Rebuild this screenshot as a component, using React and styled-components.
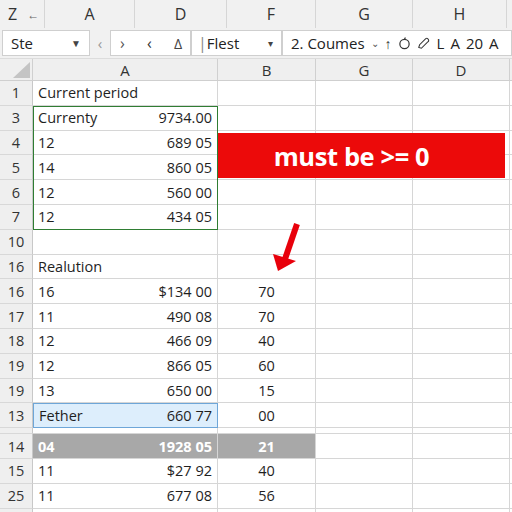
import React from "react";
import styled, { createGlobalStyle } from "styled-components";

const GlobalStyle = createGlobalStyle`
  html, body {
    margin: 0;
    padding: 0;
    background: #ffffff;
  }
  body {
    font-family: "Open Sans", "Noto Sans", sans-serif;
    color: #1f1f1f;
  }
`;

const COLS = [33, 185, 98, 97, 97];
const ROW_H = 24.8;

const Page = styled.div`
  width: 512px;
  height: 512px;
  overflow: hidden;
  display: flex;
  flex-direction: column;
  background: #fff;
`;

const TopStrip = styled.div`
  height: 28px;
  display: flex;
  background: #f1f1f1;
  flex-shrink: 0;
`;

const StripCell = styled.div`
  width: ${(p) => p.$w}px;
  flex-shrink: 0;
  display: flex;
  align-items: center;
  justify-content: ${(p) => (p.$left ? "flex-start" : "center")};
  gap: 10px;
  padding-left: ${(p) => (p.$left ? "8px" : "0")};
  box-sizing: border-box;
  border-right: 1px solid #d6d6d6;
  font-size: 16px;
  color: #333;
`;

const Toolbar = styled.div`
  height: 30px;
  display: flex;
  align-items: center;
  background: #f1f1f1;
  padding-left: 2px;
  flex-shrink: 0;
  border-bottom: 1px solid #dcdcdc;
`;

const Box = styled.div`
  width: ${(p) => p.$w}px;
  height: 26px;
  flex-shrink: 0;
  display: flex;
  align-items: center;
  justify-content: space-between;
  box-sizing: border-box;
  background: #fff;
  border: 1px solid #cfcfcf;
  padding: 0 ${(p) => p.$pr ?? 8}px 0 ${(p) => p.$pl ?? 8}px;
  font-size: 15px;
  color: #222;
  white-space: nowrap;
  overflow: hidden;
`;

const Caret = styled.span`
  font-size: 10px;
  color: #444;
`;

const Glyph = styled.span`
  font-size: ${(p) => p.$size || 16}px;
  color: ${(p) => p.$c || "#444"};
  display: inline-flex;
  align-items: center;
`;

const NavGap = styled.div`
  width: 20px;
  display: flex;
  justify-content: center;
  color: #999;
  font-size: 15px;
`;

const IconRow = styled.div`
  display: flex;
  align-items: center;
  gap: 6px;
`;

const HeaderRow = styled.div`
  height: 22px;
  display: flex;
  background: #efefef;
  border-bottom: 1px solid #cfcfcf;
  flex-shrink: 0;
  box-sizing: border-box;
`;

const ColHead = styled.div`
  width: ${(p) => p.$w}px;
  flex-shrink: 0;
  display: flex;
  align-items: center;
  justify-content: center;
  box-sizing: border-box;
  border-right: 1px solid #d0d0d0;
  font-size: 15px;
  color: #333;
`;

const Corner = styled.div`
  width: 0;
  height: 0;
  border-left: 17px solid transparent;
  border-bottom: 16px solid #c4c4c4;
  align-self: flex-end;
  margin: 0 2px 2px auto;
`;

const Body = styled.div`
  position: relative;
  flex: 1;
`;

const Row = styled.div`
  height: ${(p) => p.$h}px;
  display: flex;
`;

const RowHead = styled.div`
  width: ${COLS[0]}px;
  flex-shrink: 0;
  box-sizing: border-box;
  background: #efefef;
  border-right: 1px solid #c8c8c8;
  border-bottom: 1px solid #d8d8d8;
  display: flex;
  align-items: center;
  justify-content: center;
  font-size: 14.5px;
  color: #333;
`;

const Cell = styled.div`
  width: ${(p) => p.$w}px;
  flex-shrink: 0;
  box-sizing: border-box;
  border-right: 1px solid #d6d6d6;
  border-bottom: 1px solid #d6d6d6;
  display: flex;
  align-items: center;
  justify-content: ${(p) => p.$align || "space-between"};
  padding: 0 5px;
  font-size: 14.5px;
  background: ${(p) => (p.$total ? "#a8a8a8" : p.$sel ? "#ddeefc" : "#fff")};
  color: ${(p) => (p.$total ? "#fff" : "#1f1f1f")};
  font-weight: ${(p) => (p.$total ? 700 : 400)};
  white-space: nowrap;
  ${(p) => p.$sel && "border: 1px solid #6ea6d8;"}
`;

const LastCell = styled.div`
  flex: 1;
  border-bottom: 1px solid #d6d6d6;
`;

const GreenRange = styled.div`
  position: absolute;
  left: 33px;
  top: ${ROW_H}px;
  width: 185px;
  height: ${ROW_H * 5}px;
  box-sizing: border-box;
  border: 1.5px solid #2f7d33;
  pointer-events: none;
`;

const Banner = styled.div`
  position: absolute;
  left: 218px;
  top: 52px;
  width: 287px;
  height: 45px;
  background: #ec0a0a;
  color: #fff;
  font-weight: 700;
  font-size: 25.5px;
  letter-spacing: -0.4px;
  display: flex;
  align-items: center;
  justify-content: center;
  padding-right: 20px;
  box-sizing: border-box;
`;

const Arrow = styled.svg`
  position: absolute;
  left: 268px;
  top: 138px;
`;

const rows = [
  { h: "1", a: "Current period" },
  { h: "3", a: "Currenty", n: "9734.00" },
  { h: "4", a: "12", n: "689 05" },
  { h: "5", a: "14", n: "860 05" },
  { h: "6", a: "12", n: "560 00" },
  { h: "7", a: "12", n: "434 05" },
  { h: "10" },
  { h: "16", a: "Realution" },
  { h: "16", a: "16", n: "$134 00", b: "70" },
  { h: "17", a: "11", n: "490 08", b: "70" },
  { h: "18", a: "12", n: "466 09", b: "40" },
  { h: "19", a: "12", n: "866 05", b: "60" },
  { h: "19", a: "13", n: "650 00", b: "15" },
  { h: "13", a: "Fether", n: "660 77", b: "00", sel: true },
  { h: "", gap: true },
  { h: "14", a: "04", n: "1928 05", b: "21", total: true },
  { h: "15", a: "11", n: "$27 92", b: "40" },
  { h: "25", a: "11", n: "677 08", b: "56" },
  { h: "" },
];

function App() {
  return (
    <Page>
      <GlobalStyle />
      <TopStrip>
        <StripCell $w={45} $left>
          <span>Z</span>
          <Glyph $size={12} $c="#666">←</Glyph>
        </StripCell>
        <StripCell $w={90}>A</StripCell>
        <StripCell $w={92}>D</StripCell>
        <StripCell $w={89}>F</StripCell>
        <StripCell $w={97}>G</StripCell>
        <StripCell $w={94}>H</StripCell>
      </TopStrip>

      <Toolbar>
        <Box $w={88}>
          <span>Ste</span>
          <Caret>▼</Caret>
        </Box>
        <NavGap>‹</NavGap>
        <Box $w={81} $pl={9} $pr={8}>
          <Glyph $c="#555">›</Glyph>
          <Glyph $c="#333">‹</Glyph>
          <Glyph $size={14} $c="#444">∆</Glyph>
        </Box>
        <Box $w={91} $pl={6}>
          <span>
            <Glyph $c="#888">|</Glyph>Flest
          </span>
          <Caret>▾</Caret>
        </Box>
        <Box $w={230} $pl={8} $pr={0}>
          <IconRow>
            <span>2. Coumes</span>
            <Glyph $size={10} $c="#555">⌄</Glyph>
            <Glyph $size={14} $c="#333">↑</Glyph>
            <svg width="13" height="14" viewBox="0 0 14 14">
              <circle cx="7" cy="8" r="5" fill="none" stroke="#333" strokeWidth="1.3" />
              <path d="M7 3 L8 1" stroke="#333" strokeWidth="1.3" />
            </svg>
            <svg width="14" height="14" viewBox="0 0 16 14">
              <path
                d="M2 12 L3 9 L10 2 Q12 1 13 3 Q14 5 12 6 L5 13 Z"
                fill="none"
                stroke="#333"
                strokeWidth="1.2"
              />
            </svg>
            <span>L</span>
            <span>A</span>
            <span>20</span>
            <span>A</span>
          </IconRow>
        </Box>
      </Toolbar>

      <HeaderRow>
        <ColHead $w={COLS[0]}>
          <Corner />
        </ColHead>
        <ColHead $w={COLS[1]}>A</ColHead>
        <ColHead $w={COLS[2]}>B</ColHead>
        <ColHead $w={COLS[3]}>G</ColHead>
        <ColHead $w={COLS[4]}>D</ColHead>
      </HeaderRow>

      <Body>
        {rows.map((r, i) => (
          <Row key={i} $h={r.gap ? 6 : ROW_H}>
            <RowHead>{r.h}</RowHead>
            <Cell $w={COLS[1]} $sel={r.sel} $total={r.total}>
              <span>{r.a}</span>
              <span>{r.n}</span>
            </Cell>
            <Cell $w={COLS[2]} $align="center" $total={r.total}>
              {r.b}
            </Cell>
            <Cell $w={COLS[3]} />
            <Cell $w={COLS[4]} />
            <LastCell />
          </Row>
        ))}
        <GreenRange />
        <Banner>must be &gt;= 0</Banner>
        <Arrow width="40" height="60" viewBox="0 0 40 60">
          <path d="M29 5 L17 40" stroke="#e8000b" strokeWidth="6" />
          <path d="M5 35 L10 52 L28 42 Z" fill="#e8000b" />
        </Arrow>
      </Body>
    </Page>
  );
}

export default App;
